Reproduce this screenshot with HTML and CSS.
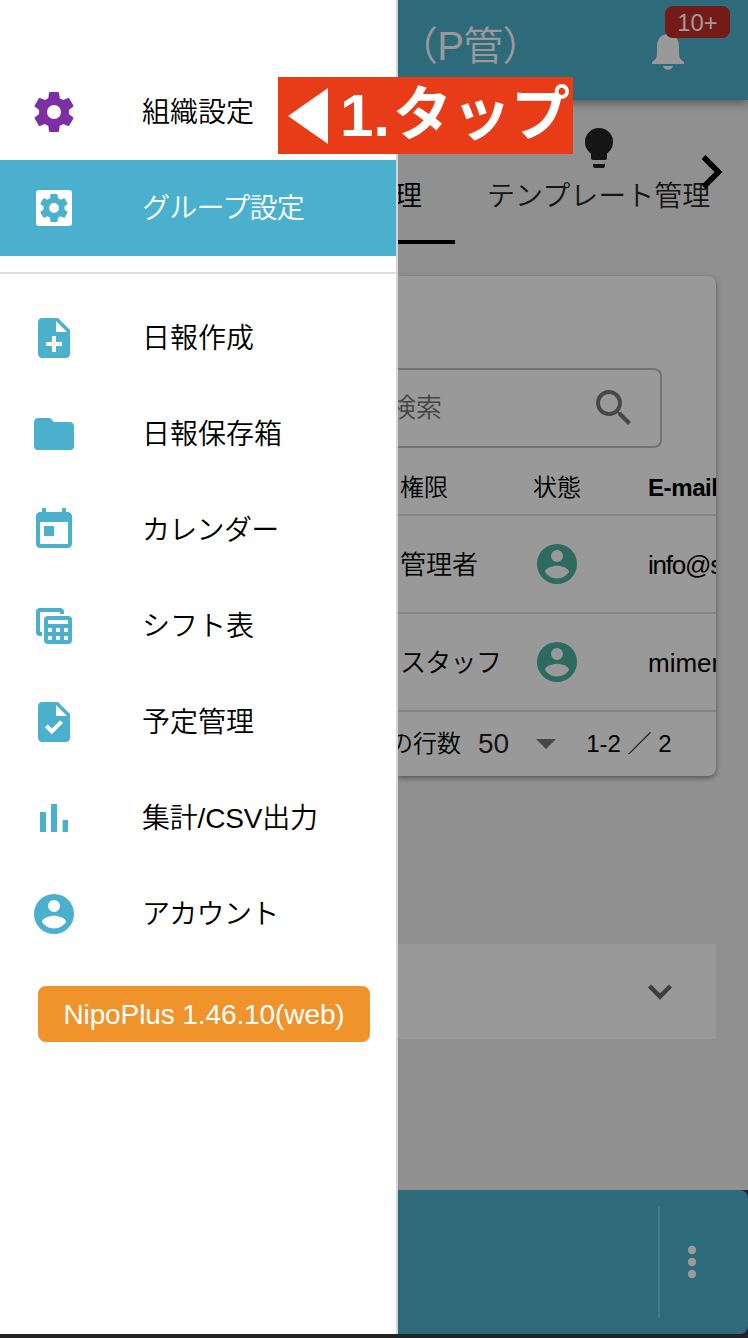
FILE: index.html
```html
<!DOCTYPE html>
<html lang="ja">
<head>
<meta charset="utf-8">
<title>NipoPlus</title>
<link rel="stylesheet" href="styles.css">
</head>
<body>
<svg class="defs" width="0" height="0">
  <symbol id="cog" viewBox="0 0 24 24"><path d="M12,15.5A3.5,3.5 0 0,1 8.5,12A3.5,3.5 0 0,1 12,8.5A3.5,3.5 0 0,1 15.5,12A3.5,3.5 0 0,1 12,15.5M19.43,12.97C19.47,12.65 19.5,12.33 19.5,12C19.5,11.67 19.47,11.34 19.43,11L21.54,9.37C21.73,9.22 21.78,8.95 21.66,8.73L19.66,5.27C19.54,5.05 19.27,4.96 19.05,5.05L16.56,6.05C16.04,5.66 15.5,5.32 14.87,5.07L14.5,2.42C14.46,2.18 14.25,2 14,2H10C9.75,2 9.54,2.18 9.5,2.42L9.13,5.07C8.5,5.32 7.96,5.66 7.44,6.05L4.95,5.05C4.73,4.96 4.46,5.05 4.34,5.27L2.34,8.73C2.21,8.95 2.27,9.22 2.46,9.37L4.57,11C4.53,11.34 4.5,11.67 4.5,12C4.5,12.33 4.53,12.65 4.57,12.97L2.46,14.63C2.27,14.78 2.21,15.05 2.34,15.27L4.34,18.73C4.46,18.95 4.73,19.03 4.95,18.95L7.44,17.94C7.96,18.34 8.5,18.68 9.13,18.93L9.5,21.58C9.54,21.82 9.75,22 10,22H14C14.25,22 14.46,21.82 14.5,21.58L14.87,18.93C15.5,18.67 16.04,18.34 16.56,17.94L19.05,18.95C19.27,19.03 19.54,18.95 19.66,18.73L21.66,15.27C21.78,15.05 21.73,14.78 21.54,14.63L19.43,12.97Z"/></symbol>
  <symbol id="account" viewBox="0 0 24 24"><path fill-rule="evenodd" d="M12,2A10,10 0 0,0 2,12A10,10 0 0,0 12,22A10,10 0 0,0 22,12A10,10 0 0,0 12,2ZM12,5A3,3 0 0,1 15,8A3,3 0 0,1 12,11A3,3 0 0,1 9,8A3,3 0 0,1 12,5ZM12,19.2C9.5,19.2 7.29,17.92 6,16C6.03,14 10,12.9 12,12.9C14,12.9 17.97,14 18,16C16.71,17.92 14.5,19.2 12,19.2Z"/></symbol>
</svg>
<div class="app">
  <div class="layout">
    <nav class="drawer">
      <a class="item"><svg class="icon org" viewBox="0 0 24 24"><use href="#cog"/></svg><span>組織設定</span></a>
      <a class="item active"><svg class="icon" viewBox="0 0 24 24"><rect x="3" y="3" width="18" height="18" rx="1.6" fill="#fff"/><use href="#cog" x="3.6" y="3.6" width="16.8" height="16.8" fill="#4ab0cd"/></svg><span class="kana">グループ設定</span></a>
      <div class="divider"></div>
      <a class="item"><svg class="icon" viewBox="0 0 24 24"><path d="M14,2H6C4.9,2 4,2.9 4,4V20C4,21.1 4.9,22 6,22H18C19.1,22 20,21.1 20,20V8L14,2Z"/><path class="cut" d="M13 3.5V9H18.5ZM11 11h2v3h3v2h-3v3h-2v-3H8v-2h3Z"/></svg><span>日報作成</span></a>
      <a class="item"><svg class="icon" viewBox="0 0 24 24"><path d="M10,4H4C2.89,4 2,4.89 2,6V18A2,2 0 0,0 4,20H20A2,2 0 0,0 22,18V8C22,6.89 21.1,6 20,6H12L10,4Z"/></svg><span>日報保存箱</span></a>
      <a class="item"><svg class="icon" viewBox="0 0 24 24"><path d="M19 3H18V1H16V3H8V1H6V3H5C3.9 3 3 3.9 3 5V19C3 20.1 3.9 21 5 21H19C20.1 21 21 20.1 21 19V5C21 3.9 20.1 3 19 3Z"/><path class="cut" d="M5 8H19V19H5Z"/><path d="M7 10h5v5H7Z"/></svg><span class="kana">カレンダー</span></a>
      <a class="item"><svg class="icon" viewBox="0 0 24 24"><path d="M5 17H6V15H5V5H15V6H17V5A2 2 0 0 0 15 3H5A2 2 0 0 0 3 5V15A2 2 0 0 0 5 17Z"/><rect x="7" y="7" width="14" height="14" rx="2"/><path class="cut" d="M9 9h10v2H9ZM9 13h2v2H9ZM13 13h2v2h-2ZM17 13h2v2h-2ZM9 17h2v2H9ZM13 17h2v2h-2ZM17 17h2v2h-2Z"/></svg><span>シフト表</span></a>
      <a class="item"><svg class="icon" viewBox="0 0 24 24"><path d="M14,2H6C4.9,2 4,2.9 4,4V20C4,21.1 4.9,22 6,22H18C19.1,22 20,21.1 20,20V8L14,2Z"/><path class="cut" d="M13 3.5V9H18.5ZM10.9 18.1L7.5 14.7L8.9 13.3L10.9 15.3L15.1 11.1L16.5 12.5Z"/></svg><span>予定管理</span></a>
      <a class="item"><svg class="icon" viewBox="0 0 24 24"><path d="M5 9h3v10H5ZM10.5 5h3v14h-3ZM16.3 13H19v6h-2.7Z"/></svg><span class="mixed">集計/CSV出力</span></a>
      <a class="item"><svg class="icon" viewBox="0 0 24 24"><use href="#account"/></svg><span class="kana">アカウント</span></a>
      <div class="version">NipoPlus 1.46.10(web)</div>
    </nav>

    <main class="page">
      <header class="topbar">
        <span class="title">（P管）</span>
        <div class="bell">
          <svg width="34" height="38" viewBox="0 0 34 38"><path d="M17 1C10 1 6 6 6 13V20C6 25 4 27 1 29V31H33V29C30 27 28 25 28 20V13C28 6 24 1 17 1ZM12 33C13 38 21 38 22 33Z"/></svg>
          <span class="badge">10+</span>
        </div>
      </header>

      <div class="tabs">
        <div class="tab current"><span>理</span></div>
        <div class="tab">
          <svg class="bulb" viewBox="0 0 24 24"><path d="M12,2A7,7 0 0,0 5,9C5,11.38 6.19,13.47 8,14.74V17A1,1 0 0,0 9,18H15A1,1 0 0,0 16,17V14.74C17.81,13.47 19,11.38 19,9A7,7 0 0,0 12,2M9,21A1,1 0 0,0 10,22H14A1,1 0 0,0 15,21V20H9V21Z"/></svg>
          <span>テンプレート管理</span>
        </div>
        <svg class="next" width="22" height="36" viewBox="0 0 22 36"><path d="M2.5 3L17.5 18L2.5 33"/></svg>
      </div>

      <section class="card">
        <div class="search"><span>検索</span><svg class="icon" viewBox="0 0 24 24"><path d="M9.5,3A6.5,6.5 0 0,1 16,9.5C16,11.11 15.41,12.59 14.44,13.73L14.71,14H15.5L20.5,19L19,20.5L14,15.5V14.71L13.73,14.44C12.59,15.41 11.11,16 9.5,16A6.5,6.5 0 0,1 3,9.5A6.5,6.5 0 0,1 9.5,3M9.5,5C7,5 5,7 5,9.5C5,12 7,14 9.5,14C12,14 14,12 14,9.5C14,7 12,5 9.5,5Z"/></svg></div>
        <div class="row head"><span>権限</span><span>状態</span><b>E-mail</b></div>
        <div class="row"><span>管理者</span><svg class="icon" viewBox="0 0 24 24"><use href="#account"/></svg><span class="mail">info@s</span></div>
        <div class="row"><span class="kana">スタッフ</span><svg class="icon" viewBox="0 0 24 24"><use href="#account"/></svg><span>mimer</span></div>
        <div class="pager"><span class="label">の行数</span><span class="size">50</span><svg width="20" height="10" viewBox="0 0 20 10"><path d="M0 0H20L10 10Z"/></svg><span>1-2 ／ 2</span></div>
      </section>

      <section class="panel"><svg width="26" height="16" viewBox="0 0 26 16"><path d="M2.5 2L13 12.5L23.5 2"/></svg></section>

      <footer class="bottombar">
        <div class="bar"><div class="line"></div><svg width="12" height="34" viewBox="0 0 12 34"><circle cx="6" cy="5" r="4.2"/><circle cx="6" cy="17" r="4.2"/><circle cx="6" cy="29" r="4.2"/></svg></div>
      </footer>
    </main>
  </div>
  <div class="callout"><svg width="40" height="56" viewBox="0 0 40 56"><path d="M0 28L40 0V56Z"/></svg><span class="num">1.</span><span class="word">タップ</span></div>
</div>
</body>
</html>
```
FILE: styles.css
```css
* { box-sizing: border-box; }
body {
  margin: 0;
  background: #242424;
  font-family: "Liberation Sans", "Noto Sans CJK JP", sans-serif;
  font-size: 28px;
  font-weight: 350;
  color: #000;
}
span, b { white-space: nowrap; }
svg { display: block; flex: none; }
.defs { position: absolute; }
.app { position: relative; width: 748px; height: 1338px; overflow: hidden; }
.layout { display: flex; height: 1334px; }
.icon { width: 48px; height: 48px; }

/* navigation drawer */
.drawer {
  width: 398px;
  flex: none;
  padding-top: 64px;
  background: #fff;
  border-right: 2px solid #d5d5d5;
}
.item {
  display: flex;
  align-items: center;
  gap: 64px;
  height: 96px;
  padding-left: 30px;
  line-height: 40px;
}
.item span { padding-top: 2px; }
.kana { letter-spacing: -.7px; }
.mixed { letter-spacing: -.2px; }
.item .icon { fill: #4ab0cb; }
.item .org { fill: #7b2fa2; }
.item .cut { fill: #fff; }
.item.active { background: #4ab0cd; color: #fff; }
.divider { height: 2px; margin: 16px 0; background: #dedfe1; }
.version {
  width: 332px;
  height: 56px;
  margin: 24px 0 0 38px;
  border-radius: 8px;
  background: #f0932b;
  color: #fff;
  text-align: center;
  line-height: 58px;
  letter-spacing: -.1px;
}

/* dimmed page */
.page {
  display: flex;
  flex-direction: column;
  width: 350px;
  background: #909090;
  overflow: hidden;
}
.topbar {
  display: flex;
  align-items: flex-start;
  justify-content: space-between;
  height: 100px;
  flex: none;
  padding: 16px 63px 0 0;
  background: #2e6b7a;
  box-shadow: 0 3px 9px rgba(0, 0, 0, .4);
  color: #999;
}
.title { font-size: 40px; line-height: 60px; letter-spacing: -.7px; }
.bell { position: relative; margin-top: 17px; fill: #999; }
.badge {
  position: absolute;
  left: 14px;
  top: -27px;
  width: 65px;
  height: 32px;
  border-radius: 8px;
  background: #741a17;
  color: #a19b99;
  font-size: 24px;
  line-height: 33px;
  text-align: center;
}
.tabs {
  position: relative;
  display: flex;
  gap: 32px;
  height: 144px;
  flex: none;
  padding-top: 24px;
}
.tab {
  display: flex;
  flex-direction: column;
  align-items: center;
  height: 120px;
  line-height: 40px;
  color: #151515;
}
.tab span { margin-top: 5px; }
.tab.current {
  align-items: flex-start;
  width: 57px;
  padding-top: 48px;
  border-bottom: 4px solid #000;
  color: #000;
}
.tab.current span { margin-left: -4px; }
.bulb { width: 48px; height: 48px; fill: #151515; }
.next { position: absolute; left: 303px; top: 54px; fill: none; stroke: #000; stroke-width: 5.5; }

.card {
  width: 318px;
  height: 500px;
  flex: none;
  margin-top: 32px;
  padding-top: 92px;
  border-radius: 0 8px 8px 0;
  background: #999;
  box-shadow: 0 2px 5px rgba(0, 0, 0, .42);
}
.search {
  display: flex;
  align-items: center;
  justify-content: space-between;
  width: 264px;
  height: 80px;
  padding-right: 22px;
  border: 2px solid #737373;
  border-left: 0;
  border-radius: 0 8px 8px 0;
  font-size: 26px;
  color: #454545;
}
.search span { margin-left: -8px; padding-bottom: 5px; }
.search .icon { fill: #484848; }
.row {
  display: grid;
  grid-template-columns: 133px 115px 1fr;
  align-items: center;
  height: 98px;
  padding-left: 2px;
  border-bottom: 2px solid #848484;
  font-size: 26px;
  line-height: 36px;
  overflow: hidden;
}
.row span, .row b { padding-top: 2px; }
.row b { font-weight: 700; letter-spacing: -.4px; }
.row .mail { letter-spacing: -1.2px; }
.row.head { height: 68px; padding-top: 12px; font-size: 24px; }
.row .icon { fill: #2d6b60; }
.pager { display: flex; align-items: center; height: 64px; font-size: 24px; line-height: 36px; }
.pager span { padding-bottom: 1px; }
.pager .label { margin-left: -9px; }
.pager .size { margin-left: 17px; font-size: 28px; color: #151515; }
.pager svg { margin: 0 30px 0 27px; fill: #484848; }

.panel {
  display: flex;
  align-items: center;
  justify-content: flex-end;
  width: 318px;
  height: 95px;
  flex: none;
  margin-top: 168px;
  padding-right: 43px;
  background: #999;
}
.panel svg { fill: none; stroke: #3e3e3e; stroke-width: 4.5; }
.bottombar { height: 144px; margin-top: auto; background: #2e1742; }
.bar {
  display: flex;
  align-items: center;
  justify-content: flex-end;
  gap: 26px;
  height: 144px;
  padding-right: 50px;
  border-radius: 0 8px 8px 0;
  background: #2e6b7a;
  fill: #999;
}
.line { width: 2px; height: 112px; background: #427b89; }

/* annotation over the page */
.callout {
  position: absolute;
  left: 278px;
  top: 77px;
  display: flex;
  align-items: center;
  width: 295px;
  height: 77px;
  padding-left: 10px;
  background: #e83b17;
  color: #fff;
  fill: #fff;
  font-weight: 700;
}
.num { margin-left: 12px; font-size: 60px; line-height: 77px; }
.word { margin-left: 3px; font-size: 59px; line-height: 77px; }
```
